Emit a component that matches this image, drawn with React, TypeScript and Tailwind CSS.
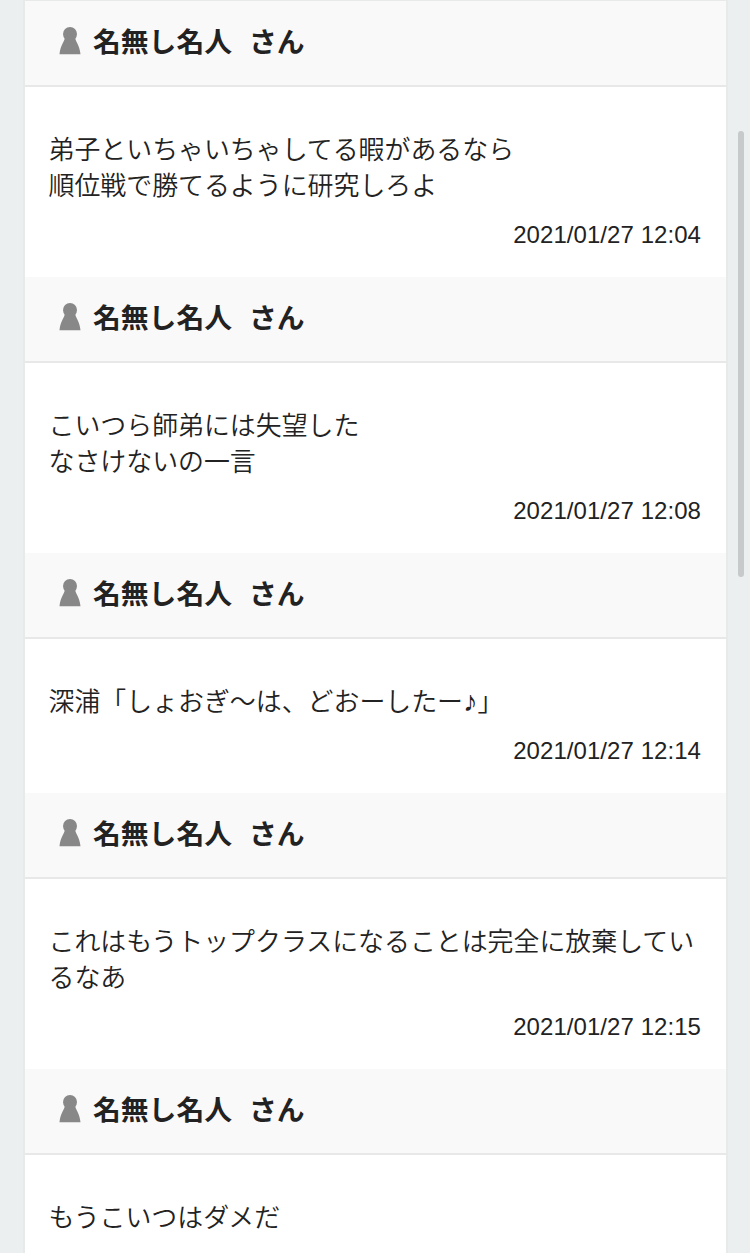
import { Fragment } from "react";

interface Comment {
  id: number;
  lines: string[];
  date?: string;
}

const comments: Comment[] = [
  {
    id: 1,
    lines: ["弟子といちゃいちゃしてる暇があるなら", "順位戦で勝てるように研究しろよ"],
    date: "2021/01/27 12:04",
  },
  {
    id: 2,
    lines: ["こいつら師弟には失望した", "なさけないの一言"],
    date: "2021/01/27 12:08",
  },
  {
    id: 3,
    lines: ["深浦「しょおぎ〜は、どおーしたー♪」"],
    date: "2021/01/27 12:14",
  },
  {
    id: 4,
    lines: ["これはもうトップクラスになることは完全に放棄してい", "るなあ"],
    date: "2021/01/27 12:15",
  },
  {
    id: 5,
    lines: ["もうこいつはダメだ"],
  },
];

function PawnIcon() {
  return (
    <svg
      className="mb-1 h-7 w-[22px] shrink-0"
      viewBox="0 0 22 28"
      fill="#888888"
    >
      <circle cx="11" cy="7" r="7" />
      <path d="M5.800 10.500h10.400c.3 4.500 4.400 7.500 5.300 16.700H.5C1.400 18 5.500 15 5.800 10.500Z" />
    </svg>
  );
}

function CommentLine({ text }: { text: string }) {
  return (
    <p className="h-9 text-[25.92px] leading-9 font-[350] whitespace-nowrap">
      {text.split("♪").map((part, index) => (
        <Fragment key={index}>
          {index > 0 && (
            <span className="font-['DejaVu_Sans',sans-serif] text-[29px] leading-none">
              ♪
            </span>
          )}
          {part}
        </Fragment>
      ))}
    </p>
  );
}

function CommentItem({ comment }: { comment: Comment }) {
  return (
    <li>
      <div className="flex h-[86px] items-center border-b-2 border-[#e8e8e8] bg-[#f9f9f9] pl-[34px]">
        <PawnIcon />
        <p className="ml-3 flex text-[27.8px] leading-9 font-bold whitespace-nowrap">
          <span>名無し名人</span>
          <span className="ml-[17px]">さん</span>
        </p>
      </div>
      <div className="pt-[45px] pr-[25px] pb-6 pl-[23.5px]">
        {comment.lines.map((line) => (
          <CommentLine key={line} text={line} />
        ))}
        {comment.date && (
          <p className="mt-[13px] text-right text-[24px] leading-9 tracking-[0.06px]">
            {comment.date}
          </p>
        )}
      </div>
    </li>
  );
}

export default function App() {
  return (
    <div className="relative h-[1253px] overflow-hidden bg-[#ebeff0] pr-[22px] pl-[23px] font-['Liberation_Sans','Noto_Sans_CJK_JP',sans-serif] text-[#222222]">
      <ul
        lang="ja"
        className="h-full overflow-hidden border-x-2 border-t border-[#e8eaea] bg-white"
      >
        {comments.map((comment) => (
          <CommentItem key={comment.id} comment={comment} />
        ))}
      </ul>
      <div className="absolute top-[131px] right-1.5 h-[446px] w-1.5 rounded-full bg-[#c6caca]" />
    </div>
  );
}
